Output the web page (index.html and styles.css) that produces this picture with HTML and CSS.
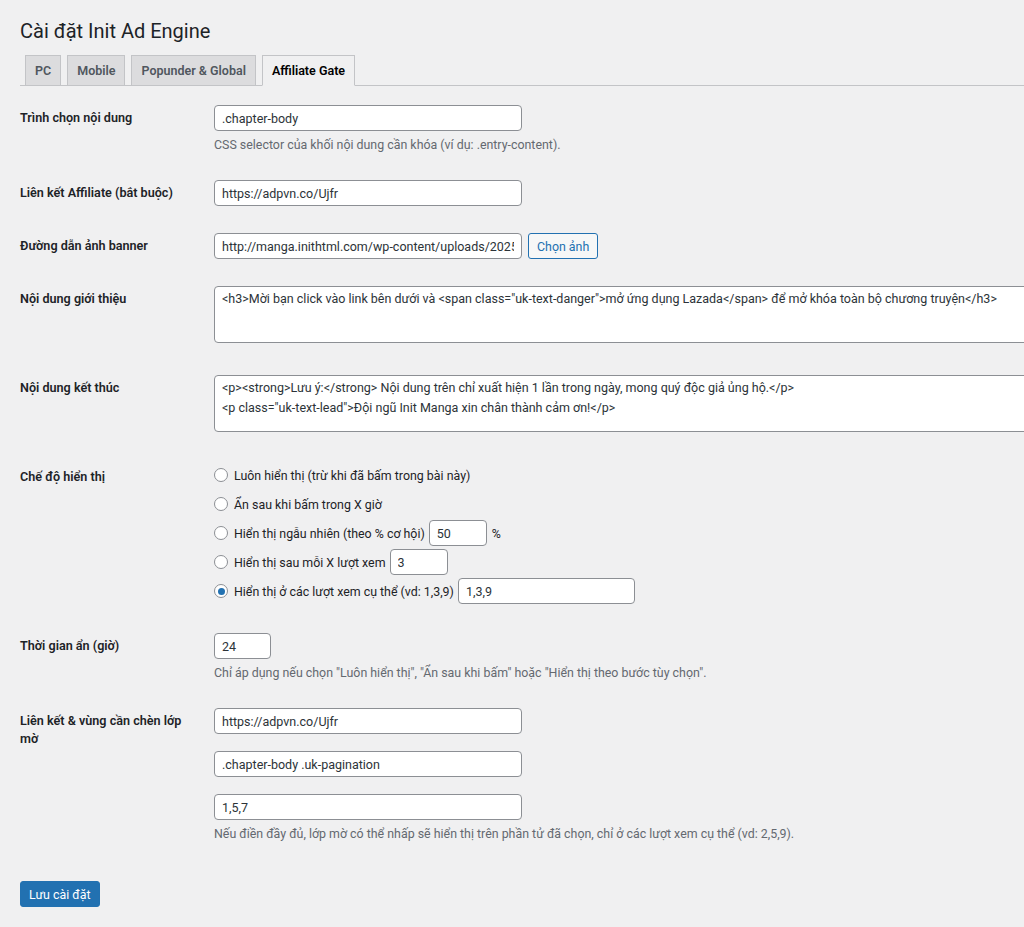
FILE: index.html
```html
<!DOCTYPE html>
<html lang="vi">
<head>
  <meta charset="UTF-8" />
  <title>Cài đặt Init Ad Engine</title>
  <link rel="stylesheet" href="styles.css">
</head>
<body>
  <div class="wrap">
    <h1 class="page-title">Cài đặt Init Ad Engine</h1>

    <nav class="nav-tab-wrapper">
      <a href="#" class="nav-tab">PC</a>
      <a href="#" class="nav-tab">Mobile</a>
      <a href="#" class="nav-tab">Popunder &amp; Global</a>
      <a href="#" class="nav-tab nav-tab-active">Affiliate Gate</a>
    </nav>

    <form class="settings-form">
      <table class="form-table">
        <colgroup>
          <col class="col-label">
          <col>
        </colgroup>
        <tr>
          <th>Trình chọn nội dung</th>
          <td>
            <input type="text" class="regular-text" value=".chapter-body">
            <p class="description">CSS selector của khối nội dung cần khóa (ví dụ: .entry-content).</p>
          </td>
        </tr>
        <tr>
          <th>Liên kết Affiliate (bắt buộc)</th>
          <td><input type="text" class="regular-text" value="https://adpvn.co/Ujfr"></td>
        </tr>
        <tr>
          <th>Đường dẫn ảnh banner</th>
          <td class="inline-field">
            <input type="text" class="regular-text" value="http://manga.inithtml.com/wp-content/uploads/2025/07/lazada-banner.jpg">
            <button type="button" class="button">Chọn ảnh</button>
          </td>
        </tr>
        <tr>
          <th>Nội dung giới thiệu</th>
          <td><textarea class="large-text">&lt;h3&gt;Mời bạn click vào link bên dưới và &lt;span class="uk-text-danger"&gt;mở ứng dụng Lazada&lt;/span&gt; để mở khóa toàn bộ chương truyện&lt;/h3&gt;</textarea></td>
        </tr>
        <tr>
          <th>Nội dung kết thúc</th>
          <td><textarea class="large-text">&lt;p&gt;&lt;strong&gt;Lưu ý:&lt;/strong&gt; Nội dung trên chỉ xuất hiện 1 lần trong ngày, mong quý độc giả ủng hộ.&lt;/p&gt;
&lt;p class="uk-text-lead"&gt;Đội ngũ Init Manga xin chân thành cảm ơn!&lt;/p&gt;</textarea></td>
        </tr>
        <tr>
          <th>Chế độ hiển thị</th>
          <td>
            <fieldset class="radio-list">
              <label class="radio-line"><input type="radio" name="mode"> Luôn hiển thị (trừ khi đã bấm trong bài này)</label>
              <label class="radio-line"><input type="radio" name="mode"> Ẩn sau khi bấm trong X giờ</label>
              <label class="radio-line"><input type="radio" name="mode"> Hiển thị ngẫu nhiên (theo % cơ hội) <input type="text" class="small-text" value="50"> %</label>
              <label class="radio-line"><input type="radio" name="mode"> Hiển thị sau mỗi X lượt xem <input type="text" class="small-text" value="3"></label>
              <label class="radio-line"><input type="radio" name="mode" checked> Hiển thị ở các lượt xem cụ thể (vd: 1,3,9) <input type="text" class="medium-text" value="1,3,9"></label>
            </fieldset>
          </td>
        </tr>
        <tr>
          <th>Thời gian ẩn (giờ)</th>
          <td>
            <input type="text" class="tiny-text" value="24">
            <p class="description">Chỉ áp dụng nếu chọn "Luôn hiển thị", "Ẩn sau khi bấm" hoặc "Hiển thị theo bước tùy chọn".</p>
          </td>
        </tr>
        <tr>
          <th>Liên kết &amp; vùng cần chèn lớp mờ</th>
          <td>
            <div class="stack">
              <input type="text" class="regular-text" value="https://adpvn.co/Ujfr">
              <input type="text" class="regular-text" value=".chapter-body .uk-pagination">
              <input type="text" class="regular-text" value="1,5,7">
            </div>
            <p class="description">Nếu điền đầy đủ, lớp mờ có thể nhấp sẽ hiển thị trên phần tử đã chọn, chỉ ở các lượt xem cụ thể (vd: 2,5,9).</p>
          </td>
        </tr>
      </table>

      <p class="submit">
        <button type="submit" class="button-primary">Lưu cài đặt</button>
      </p>
    </form>
  </div>
</body>
</html>
```

FILE: styles.css
```css
* {
  box-sizing: border-box;
}

html {
  overflow-x: hidden;
}

body {
  margin: 0;
  background: #f0f0f1;
  color: #1d2327;
  font-family: Roboto, 'Noto Sans', sans-serif;
  font-size: 12.4px;
}

.wrap {
  padding: 18px 0 0 20px;
  overflow: hidden;
}

.page-title {
  margin: 0;
  font-size: 20px;
  font-weight: 400;
  line-height: 26px;
  color: #1d2327;
}

/* Tabs */
.nav-tab-wrapper {
  display: flex;
  gap: 6px;
  margin-top: 11px;
  padding-left: 5px;
  border-bottom: 1px solid #c3c4c7;
}

.nav-tab {
  display: block;
  margin-bottom: -1px;
  padding: 4px 9px;
  line-height: 21px;
  font-size: 12.5px;
  font-weight: 600;
  color: #50575e;
  text-decoration: none;
  background: #dcdcde;
  border: 1px solid #c3c4c7;
}

.nav-tab-active {
  color: #000;
  background: #f0f0f1;
  border-bottom-color: #f0f0f1;
}

/* Form table */
.form-table {
  table-layout: fixed;
  width: 1060px;
  margin-top: 6px;
  border-collapse: collapse;
}

.col-label {
  width: 194px;
}

.form-table th {
  padding: 17px 20px 14px 0;
  vertical-align: top;
  text-align: left;
  font-size: 12.6px;
  font-weight: 600;
  line-height: 18px;
}

.form-table td {
  padding: 13px 0 14px;
  vertical-align: top;
}

input[type="text"],
textarea {
  display: block;
  height: 26px;
  padding: 0 7px;
  border: 1px solid #8c8f94;
  border-radius: 4px;
  background: #fff;
  color: #2c3338;
  font-family: inherit;
  font-size: 12.5px;
  box-shadow: none;
}

.regular-text {
  width: 308px;
}

.tiny-text {
  width: 57px;
}

.small-text {
  width: 58px;
}

.medium-text {
  width: 177px;
}

.inline-field {
  display: flex;
  gap: 6px;
}

textarea.large-text {
  width: 840px;
  height: 57px;
  margin-bottom: 5px;
  padding: 2px 7px;
  font-size: 12.5px;
  line-height: 20px;
  resize: none;
}

.description {
  margin: 5px 0 0;
  line-height: 17px;
  color: #646970;
}

.stack {
  display: flex;
  flex-direction: column;
  gap: 17px;
}

/* Radios */
.radio-list {
  display: flex;
  flex-direction: column;
  gap: 3px;
  margin: -2px 0 2px;
  padding: 0;
  border: 0;
}

.radio-line {
  display: flex;
  align-items: center;
  gap: 4px;
  min-height: 26px;
}

.radio-line input[type="radio"] {
  appearance: none;
  display: grid;
  place-items: center;
  width: 14px;
  height: 14px;
  margin: 0 2px 0 0;
  border: 1px solid #8c8f94;
  border-radius: 50%;
  background: #fff;
}

.radio-line input[type="radio"]:checked::before {
  content: '';
  width: 7px;
  height: 7px;
  border-radius: 50%;
  background: #2271b1;
}

.radio-line input[type="text"] {
  margin-right: 1px;
}

/* Buttons */
.button {
  height: 26px;
  padding: 0 8px;
  border: 1px solid #2271b1;
  border-radius: 3px;
  background: #f6f7f7;
  color: #2271b1;
  font-family: inherit;
  font-size: 12.4px;
}

.submit {
  margin: 25px 0 0;
}

.button-primary {
  height: 26px;
  padding: 0 8px;
  border: 1px solid #2271b1;
  border-radius: 3px;
  background: #2271b1;
  color: #fff;
  font-family: inherit;
  font-size: 12.4px;
}
```
